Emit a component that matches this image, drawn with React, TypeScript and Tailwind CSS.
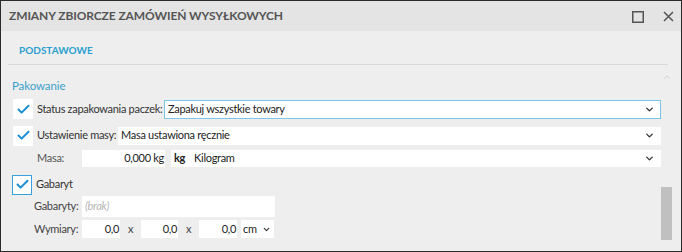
import { ChevronDown, ChevronUp, Check } from "lucide-react";

const font = { fontFamily: 'Lato, "Noto Sans", sans-serif' };

function Box({ focused = false }: { focused?: boolean }) {
  return (
    <div
      className={`w-[20px] h-[20px] bg-white flex items-center justify-center shrink-0 ${
        focused ? "border border-[#3ba0dd]" : ""
      }`}
    >
      <Check className="w-[15px] h-[15px] text-[#1a8fd6]" strokeWidth={3.2} />
    </div>
  );
}

function Chevron() {
  return <ChevronDown className="w-[11px] h-[11px] text-[#333]" strokeWidth={3} />;
}

export default function App() {
  return (
    <div
      className="w-[682px] h-[252px] border border-[#2a2a2a] bg-[#eeeeee] flex flex-col overflow-hidden text-[#333]"
      style={font}
    >
      {/* Title bar */}
      <div className="h-[30px] bg-[#e4e4e4] flex items-center justify-between pl-[8px] pr-[7px] shrink-0">
        <span className="text-[12px] font-bold text-[#555] tracking-[-0.1px]">
          ZMIANY ZBIORCZE ZAMÓWIEŃ WYSYŁKOWYCH
        </span>
        <div className="flex items-center gap-[19px] text-[#555] pt-[1px]">
          <svg width="12" height="12" viewBox="0 0 12 12">
            <rect x="0.75" y="0.75" width="10.5" height="10.5" fill="none" stroke="#555" strokeWidth="1.5" />
          </svg>
          <svg width="11" height="11" viewBox="0 0 11 11">
            <path d="M1 1 L10 10 M10 1 L1 10" stroke="#555" strokeWidth="1.5" />
          </svg>
        </div>
      </div>

      {/* Content */}
      <div className="relative flex-1 px-[7px] text-[11px] tracking-[-0.3px]">
        <div className="h-[34px] border-b border-[#d8d8d8] mr-[6px] flex items-end pb-[6px] pl-[11px]">
          <span className="text-[10px] font-bold text-[#2a9fd0] tracking-[0px]">PODSTAWOWE</span>
        </div>

        <ChevronUp className="absolute right-[9px] top-[41px] w-[10px] h-[10px] text-[#c8c8c8]" />

        <div className="pl-[4px] pt-[13px] text-[11.5px] text-[#3a9ecb] leading-[16px] tracking-[-0.1px]">
          Pakowanie
        </div>

        {/* Row 1 */}
        <div className="flex items-center mt-[5px] pl-[5px] h-[20px]">
          <Box />
          <span className="ml-[4px] w-[127px] text-[#333] whitespace-nowrap">Status zapakowania paczek:</span>
          <div className="w-[497px] h-[19px] bg-white border border-[#7cc4e8] flex items-center justify-between pl-[3px] pr-[5px]">
            <span className="text-[#222]">Zapakuj wszystkie towary</span>
            <Chevron />
          </div>
        </div>

        {/* Row 2 */}
        <div className="flex items-center mt-[7px] pl-[5px] h-[19px]">
          <Box />
          <span className="ml-[4px] w-[81px] text-[#333] whitespace-nowrap">Ustawienie masy:</span>
          <div className="w-[543px] h-[18px] bg-white flex items-center justify-between pl-[3px] pr-[6px]">
            <span className="text-[#222]">Masa ustawiona ręcznie</span>
            <Chevron />
          </div>
        </div>

        {/* Row 3 */}
        <div className="flex items-center mt-[4px] h-[18px]">
          <span className="ml-[29px] w-[45px] text-[#555]">Masa:</span>
          <div className="w-[83px] h-[17px] bg-white flex items-center justify-end pr-[1px]">
            <span className="text-[#222]">0,000 kg</span>
          </div>
          <div className="ml-[6px] w-[490px] h-[17px] bg-white flex items-center justify-between pl-[3px] pr-[6px]">
            <span className="text-[#222]">
              <b className="mr-[9px]">kg</b>Kilogram
            </span>
            <Chevron />
          </div>
        </div>

        {/* Row 4 */}
        <div className="flex items-center mt-[7px] pl-[4px] h-[21px]">
          <Box focused />
          <span className="ml-[4px] text-[#333]">Gabaryt</span>
        </div>

        {/* Row 5 */}
        <div className="flex items-center mt-[1px] h-[21px]">
          <span className="ml-[26px] w-[48px] text-[#444] whitespace-nowrap">Gabaryty:</span>
          <div className="w-[193px] h-[21px] bg-white flex items-center pl-[3px]">
            <span className="italic text-[#b5b5b5]">(brak)</span>
          </div>
        </div>

        {/* Row 6 */}
        <div className="flex items-center mt-[3px] h-[18px]">
          <span className="ml-[26px] w-[48px] text-[#444] whitespace-nowrap">Wymiary:</span>
          <div className="w-[38px] h-[18px] bg-white flex items-center justify-end pr-[1px] text-[#222]">0,0</div>
          <span className="w-[21px] text-center text-[#444]">x</span>
          <div className="w-[37px] h-[18px] bg-white flex items-center justify-end pr-[1px] text-[#222]">0,0</div>
          <span className="w-[21px] text-center text-[#444]">x</span>
          <div className="w-[38px] h-[18px] bg-white flex items-center justify-end pr-[1px] text-[#222]">0,0</div>
          <div className="ml-[4px] w-[33px] h-[18px] bg-white flex items-center justify-between pl-[2px] pr-[3px] text-[#222]">
            cm
            <ChevronDown className="w-[9px] h-[9px] text-[#333]" strokeWidth={3} />
          </div>
        </div>

        {/* Scrollbar thumb */}
        <div className="absolute right-[9px] top-[156px] w-[11px] h-[53px] bg-[#c0c0c0]" />
      </div>
    </div>
  );
}
